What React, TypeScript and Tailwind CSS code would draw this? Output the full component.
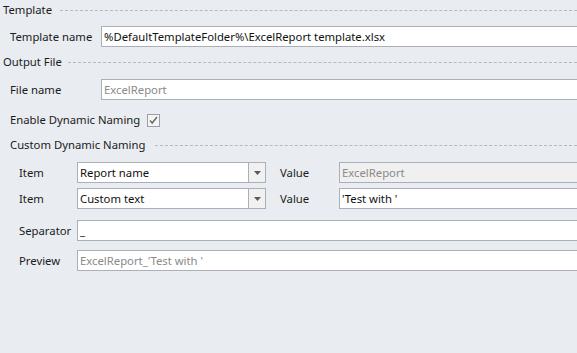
import React from "react";

const font = { fontFamily: '"Noto Sans", "Open Sans", Arial, sans-serif' };

function Header({ title, lineStart }: { title: string; lineStart: string }) {
  return (
    <div className="flex h-[20px] items-center">
      <span className={`shrink-0 whitespace-nowrap ${lineStart}`}>{title}</span>
      <div className="flex-1 border-t border-dashed border-[#b5b9c1]" />
    </div>
  );
}

function TextBox({ value, dim, disabled }: { value: string; dim?: boolean; disabled?: boolean }) {
  return (
    <div
      className={`flex h-[21px] flex-1 items-center border border-r-0 border-[#abb0b8] pl-[2px] ${
        disabled ? "bg-[#f0f0f0]" : "bg-white"
      } ${dim ? "text-[#8a8a8a]" : "text-[#111]"}`}
    >
      <span className="whitespace-nowrap">{value}</span>
    </div>
  );
}

function Combo({ value }: { value: string }) {
  return (
    <div className="flex h-[21px] w-[189px] border border-[#abb0b8] bg-white">
      <div className="flex flex-1 items-center pl-[2px] text-[#111]">{value}</div>
      <div className="flex w-[17px] items-center justify-center border-l border-[#abb0b8] bg-[#f1f1f1]">
        <svg width="7" height="4" viewBox="0 0 7 4">
          <path d="M0 0h7L3.5 4z" fill="#5a5a5a" />
        </svg>
      </div>
    </div>
  );
}

function ItemRow({ item, value, valueDisabled, className }: { item: string; value: string; valueDisabled?: boolean; className: string }) {
  return (
    <div className={`flex h-[21px] items-center ${className}`}>
      <span className="w-[77px] shrink-0 pl-[19px]">Item</span>
      <Combo value={item} />
      <span className="w-[73px] shrink-0 pl-[14px]">Value</span>
      <TextBox value={value} dim={valueDisabled} disabled={valueDisabled} />
    </div>
  );
}

export default function App() {
  return (
    <div
      className="flex h-[353px] w-[577px] flex-col overflow-hidden bg-[#e9ecf1] text-[11.3px] leading-none text-[#1b1b1b]"
      style={font}
    >
      <Header title="Template" lineStart="w-[60px] pl-[3px]" />

      <div className="mt-[6px] flex h-[21px] items-center">
        <span className="w-[101px] shrink-0 whitespace-nowrap pl-[10px]">Template name</span>
        <TextBox value="%DefaultTemplateFolder%\ExcelReport template.xlsx" />
      </div>

      <div className="mt-[5px]">
        <Header title="Output File" lineStart="w-[68px] pl-[3px]" />
      </div>

      <div className="mt-[7px] flex h-[21px] items-center">
        <span className="w-[101px] shrink-0 whitespace-nowrap pl-[10px]">File name</span>
        <TextBox value="ExcelReport" dim />
      </div>

      <div className="mt-[10px] flex h-[20px] items-center">
        <span className="w-[147px] shrink-0 whitespace-nowrap pl-[10px]">Enable Dynamic Naming</span>
        <div className="flex h-[13px] w-[13px] items-center justify-center border border-[#9a9ea6] bg-[#f4f4f4]">
          <svg width="9" height="9" viewBox="0 0 9 9">
            <path d="M1 4.5l2.2 2.5L8 1" stroke="#6a6a6a" strokeWidth="1.5" fill="none" />
          </svg>
        </div>
      </div>

      <div className="mt-[5px]">
        <Header title="Custom Dynamic Naming" lineStart="w-[155px] pl-[10px]" />
      </div>

      <ItemRow item="Report name" value="ExcelReport" valueDisabled className="mt-[7px]" />
      <ItemRow item="Custom text" value="'Test with '" className="mt-[5px]" />

      <div className="mt-[11px] flex h-[21px] items-center">
        <span className="w-[77px] shrink-0 pl-[19px]">Separator</span>
        <TextBox value="_" />
      </div>

      <div className="mt-[9px] flex h-[21px] items-center">
        <span className="w-[77px] shrink-0 pl-[19px]">Preview</span>
        <TextBox value="ExcelReport_'Test with '" dim />
      </div>
    </div>
  );
}
